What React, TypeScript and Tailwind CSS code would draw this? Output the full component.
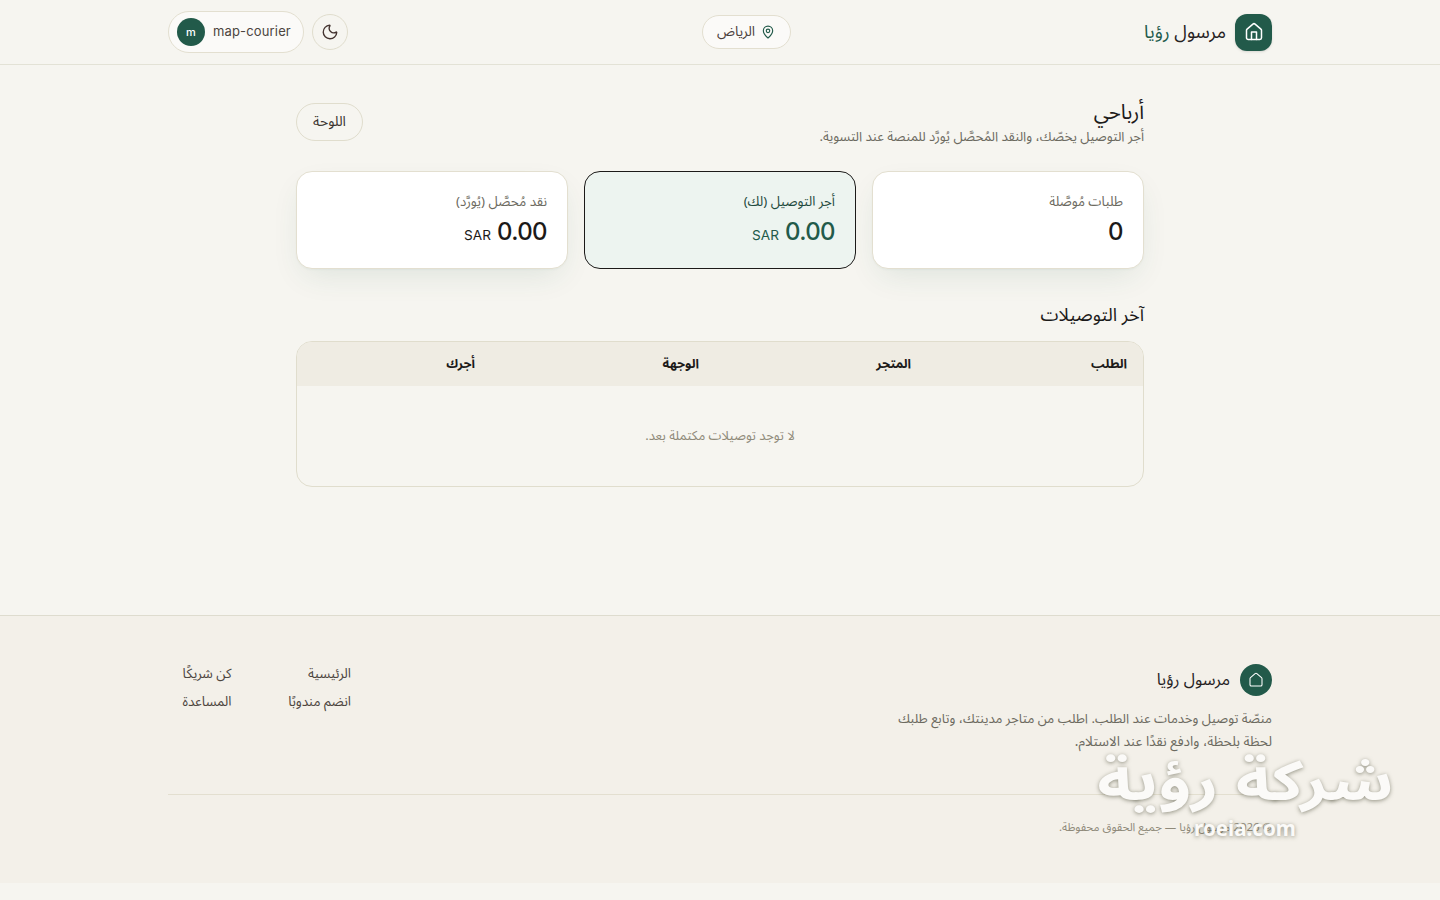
import { MapPin, Moon } from "lucide-react";

const stats = [
  { label: "طلبات مُوصَّلة", value: "0", unit: "", active: false },
  { label: "أجر التوصيل (لك)", value: "0.00", unit: "SAR", active: true },
  { label: "نقد مُحصَّل (يُورَّد)", value: "0.00", unit: "SAR", active: false },
];

function Header() {
  return (
    <header className="h-[65px] border-b border-[#e3e2d6]">
      <div className="mx-auto flex h-16 w-[1104px] items-center justify-between">
        <div className="flex items-center gap-[9px]">
          <span className="flex size-[37px] items-center justify-center rounded-xl bg-[#225a4a] text-white shadow-sm">
            <svg width="20" height="20" viewBox="0 0 24 24" fill="none" stroke="currentColor" strokeWidth="1.8" strokeLinecap="round" strokeLinejoin="round">
              <path d="M3 10a2 2 0 0 1 .7-1.5l7-6a2 2 0 0 1 2.6 0l7 6A2 2 0 0 1 21 10v9a2 2 0 0 1-2 2H5a2 2 0 0 1-2-2z" />
              <path d="M9 21v-9h6v9" />
            </svg>
          </span>
          <span className="whitespace-nowrap pt-px text-[18.2px] text-[#26221f]">
            مرسول <span className="text-[#225a4a]">رؤيا</span>
          </span>
        </div>
        <div className="ml-px flex h-[34px] w-[89px] items-center gap-[6px] rounded-full border border-[#e3dfd0] bg-[#fbfaf8] pr-[15px] text-[13.8px] text-[#4c413d]">
          <MapPin size={14} strokeWidth={2} className="text-[#225a4a]" />
          <span>الرياض</span>
        </div>
        <div className="flex items-center gap-2">
          <span className="flex size-9 items-center justify-center rounded-full border border-[#e0ddcd] text-[#43332f]">
            <Moon size={18} strokeWidth={1.8} />
          </span>
          <div
            dir="ltr"
            className="flex h-[42px] w-[136px] items-center gap-2 rounded-full border border-[#e3dfd0] bg-[#fbfaf8] pl-2 font-['Inter'] text-[13px] tracking-[0.15px] text-[#4c453e]"
          >
            <span className="flex size-7 items-center justify-center rounded-full bg-[#225a4a] text-[11px] font-medium text-white">
              m
            </span>
            <span>map-courier</span>
          </div>
        </div>
      </div>
    </header>
  );
}

function StatCard({ label, value, unit, active }: (typeof stats)[number]) {
  return (
    <div
      className={
        active
          ? "h-[98px] rounded-2xl border border-[#1c1a19] bg-[#edf4f0] p-5 text-[#225a4a]"
          : "h-[98px] rounded-2xl border border-[#e3dfd0] bg-white p-5 text-[#1c1a19] shadow-[0_1px_2px_rgba(34,90,74,0.04),0_12px_32px_-8px_rgba(34,90,74,0.12)]"
      }
    >
      <div className={active ? "text-[13.3px] leading-5 text-[#1f4a3e]" : "text-[13.3px] leading-5 text-[#6c6a60]"}>
        {label}
      </div>
      <div dir="ltr" className="mt-1 flex items-baseline justify-end gap-[6px] font-['Inter'] leading-8">
        {unit && <span className="text-[13.6px]">{unit}</span>}
        <span className="text-[24px] tracking-[-0.6px] font-medium">{value}</span>
      </div>
    </div>
  );
}

function Footer() {
  return (
    <footer className="mt-32 h-[268px] border-t border-[#dedccf] bg-[#f3f0e9]">
      <div className="mx-auto w-[1104px] pt-12">
        <div className="flex h-[131px] justify-between border-b border-[#e3dfd0]">
          <div className="w-[384px]">
            <div className="flex items-center gap-[10px]">
              <span className="flex size-8 items-center justify-center rounded-full bg-[#225a4a] text-white">
                <svg width="16" height="16" viewBox="0 0 24 24" fill="none" stroke="currentColor" strokeWidth="1.6" strokeLinecap="round" strokeLinejoin="round">
                  <path d="M3 10a2 2 0 0 1 .7-1.5l7-6a2 2 0 0 1 2.6 0l7 6A2 2 0 0 1 21 10v9a2 2 0 0 1-2 2H5a2 2 0 0 1-2-2z" />
                </svg>
              </span>
              <span className="text-[16.3px] text-[#26221f]">مرسول رؤيا</span>
            </div>
            <p className="mt-3 text-[13.15px] leading-[22.75px] text-[#6c6a60]">
              <span className="whitespace-nowrap">منصّة توصيل وخدمات عند الطلب. اطلب من متاجر مدينتك، وتابع طلبك</span>
              <br />
              <span className="text-[13.6px]">لحظة بلحظة، وادفع نقدًا عند الاستلام.</span>
            </p>
          </div>
          <nav className="grid w-[183px] grid-cols-2 content-start gap-x-14 gap-y-2 whitespace-nowrap text-[13.4px] leading-5 text-[#4c453e]">
            <a>الرئيسية</a>
            <a>كن شريكًا</a>
            <a>انضم مندوبًا</a>
            <a>المساعدة</a>
          </nav>
        </div>
        <p className="mt-6 text-[11.4px] leading-4 text-[#8f8a7a]">© 2026 مرسول رؤيا — جميع الحقوق محفوظة.</p>
      </div>
    </footer>
  );
}

export default function App() {
  return (
    <div
      dir="rtl"
      className="relative h-[900px] w-[1440px] overflow-hidden bg-[#f6f5f0] font-['Noto_Sans_Arabic'] text-[#1c1a19]"
    >
      <Header />
      <main className="mx-auto w-[848px] pt-8">
        <div className="flex h-[50px] items-center justify-between">
          <div>
            <h1 className="text-[20.5px] leading-[29px]">أرباحي</h1>
            <p className="text-[13.2px] leading-5 text-[#6c6a60]">
              أجر التوصيل يخصّك، والنقد المُحصَّل يُورَّد للمنصة عند التسوية.
            </p>
          </div>
          <button className="h-[38px] w-[67px] rounded-full border border-[#e0ddcd] pb-0.5 text-[14px] text-[#3a342f]">اللوحة</button>
        </div>
        <section className="mt-6 grid grid-cols-3 gap-4">
          {stats.map((s) => (
            <StatCard key={s.label} {...s} />
          ))}
        </section>
        <h2 className="mt-8 text-[18.2px] leading-7">آخر التوصيلات</h2>
        <div className="mt-3 h-[146px] overflow-hidden rounded-2xl border border-[#e0ddcd]">
          <div className="grid h-11 grid-cols-[216px_212px_224px_194px] items-center bg-[#efece3] text-[12.8px] font-bold">
            <span className="pr-4">الطلب</span>
            <span className="pr-4">المتجر</span>
            <span className="pr-4">الوجهة</span>
            <span className="pr-4">أجرك</span>
          </div>
          <div className="flex h-[100px] items-center justify-center pt-0.5 text-[13px] text-[#8f8a7a]">
            لا توجد توصيلات مكتملة بعد.
          </div>
        </div>
      </main>
      <Footer />
      <div className="pointer-events-none absolute left-[1097px] top-[740px] flex w-[296px] flex-col items-center whitespace-nowrap font-bold text-[#fbfaf8] [text-shadow:0_1px_4px_rgba(80,80,60,0.6)]">
        <div className="scale-x-[1.21] text-[55px] leading-[86px]">شركة رؤية</div>
        <div dir="ltr" className="-mt-[10px] font-['Noto_Sans'] text-[20.6px] leading-6">roeia.com</div>
      </div>
    </div>
  );
}
